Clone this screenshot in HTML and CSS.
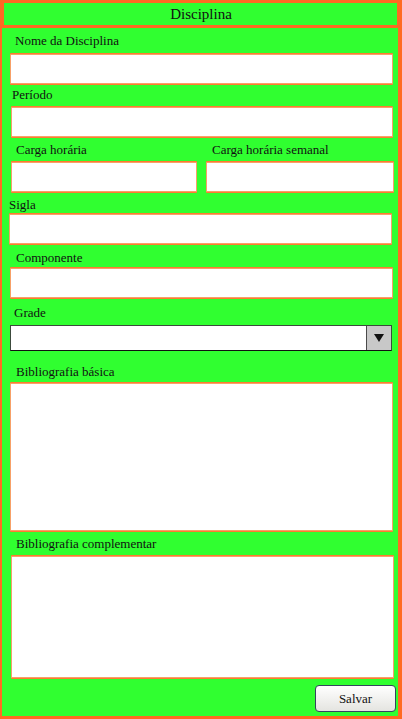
FILE: index.html
```html
<!DOCTYPE html>
<html lang="pt-BR">
<head>
<meta charset="utf-8">
<title>Disciplina</title>
<link rel="stylesheet" href="styles.css">
</head>
<body>
<header class="title-bar">Disciplina</header>
<form class="panel">
  <div class="field f-nome">
    <label class="lbl">Nome da Disciplina</label>
    <input class="txt" type="text">
  </div>
  <div class="field f-periodo">
    <label class="lbl">Período</label>
    <input class="txt" type="text">
  </div>
  <div class="row">
    <div class="field f-carga">
      <label class="lbl">Carga horária</label>
      <input class="txt" type="text">
    </div>
    <div class="field f-semanal">
      <label class="lbl">Carga horária semanal</label>
      <input class="txt" type="text">
    </div>
  </div>
  <div class="field f-sigla">
    <label class="lbl">Sigla</label>
    <input class="txt" type="text">
  </div>
  <div class="field f-comp">
    <label class="lbl">Componente</label>
    <input class="txt" type="text">
  </div>
  <div class="field f-grade">
    <label class="lbl">Grade</label>
    <div class="select">
      <div class="select-value"></div>
      <div class="select-btn"><span class="tri"></span></div>
    </div>
  </div>
  <div class="field f-bib">
    <label class="lbl">Bibliografia básica</label>
    <textarea class="area"></textarea>
  </div>
  <div class="field f-bibc">
    <label class="lbl">Bibliografia complementar</label>
    <textarea class="area"></textarea>
  </div>
  <div class="actions">
    <button type="button" class="btn">Salvar</button>
  </div>
</form>
</body>
</html>
```
FILE: styles.css
```css
html, body {
  margin: 0;
  padding: 0;
}
body {
  background: #ff6a22;
  width: 402px;
  height: 719px;
  overflow: hidden;
  font-family: "Liberation Serif", "Times New Roman", serif;
  color: #111;
}
.title-bar {
  margin: 3px 5px 0 4px;
  height: 22px;
  line-height: 22px;
  background: #30ff30;
  text-align: center;
  font-size: 15px;
  padding-left: 1px;
}
.panel {
  margin: 3px 4px 0 2px;
  height: 688px;
  box-sizing: border-box;
  padding-top: 5px;
  background: #30ff30;
  display: flex;
  flex-direction: column;
}
.field {
  display: flex;
  flex-direction: column;
  align-items: flex-start;
}
.lbl {
  display: block;
  font-size: 13px;
  line-height: 15px;
}
.txt, .area {
  box-sizing: border-box;
  margin: 0;
  padding: 2px 4px;
  background: #fff;
  border: 1px solid #f7a068;
  box-shadow: 0 -1px 0 #ff7a30, 0 1px 0 #ff7a30;
  border-radius: 1px;
  font-family: inherit;
  font-size: 13px;
  outline: none;
}
.txt { height: 30px; }
.area { resize: none; }

.f-nome .lbl { margin-left: 13px; }
.f-nome .txt { margin: 6px 0 0 8px; width: 383px; }

.f-periodo { margin-top: 3px; }
.f-periodo .lbl { margin-left: 10px; }
.f-periodo .txt { margin: 5px 0 0 9px; width: 382px; }

.row {
  display: flex;
  margin-top: 5px;
}
.f-carga .lbl { margin-left: 14px; }
.f-carga .txt { margin: 5px 0 0 9px; width: 186px; }
.f-semanal .lbl { margin-left: 15px; }
.f-semanal .txt { margin: 5px 0 0 9px; width: 188px; }

.f-sigla { margin-top: 5px; }
.f-sigla .lbl { margin-left: 7px; }
.f-sigla .txt { margin: 2px 0 0 7px; width: 383px; }

.f-comp { margin-top: 6px; }
.f-comp .lbl { margin-left: 14px; }
.f-comp .txt { margin: 3px 0 0 8px; width: 383px; }

.f-grade { margin-top: 7px; }
.f-grade .lbl { margin-left: 12px; }
.select {
  margin: 5px 0 0 8px;
  width: 382px;
  height: 26px;
  box-sizing: border-box;
  display: flex;
  border: 1px solid #3c4a3c;
  border-bottom-color: #111;
  background: #fff;
}
.select-value { flex: 1; }
.select-btn {
  width: 24px;
  border-left: 1px solid #4a4a4a;
  background: #c8c8c8;
  display: flex;
  align-items: center;
  justify-content: center;
}
.tri {
  width: 0;
  height: 0;
  border-left: 5px solid transparent;
  border-right: 5px solid transparent;
  border-top: 8px solid #111;
}

.f-bib { margin-top: 13px; }
.f-bib .lbl { margin-left: 14px; }
.f-bib .area { margin: 4px 0 0 8px; width: 383px; height: 148px; }

.f-bibc { margin-top: 5px; }
.f-bibc .lbl { margin-left: 14px; }
.f-bibc .area { margin: 5px 0 0 9px; width: 383px; height: 122px; }

.actions {
  display: flex;
  justify-content: flex-end;
  margin-top: 7px;
  padding-right: 2px;
}
.btn {
  width: 81px;
  height: 27px;
  box-sizing: border-box;
  border: 1px solid #34445e;
  border-radius: 4px;
  background: linear-gradient(#ffffff, #e4e4e0);
  font-family: "Liberation Serif", "Times New Roman", serif;
  font-size: 13px;
  color: #111;
  padding: 0;
}
```
